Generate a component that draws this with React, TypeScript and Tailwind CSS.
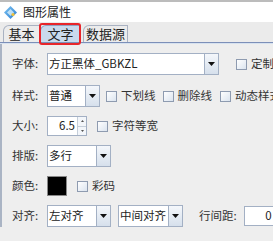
import React from "react";

const font = { fontFamily: '"Noto Sans CJK SC", "Noto Sans", sans-serif' };

function Arrow() {
  return (
    <div className="flex h-full w-[14px] shrink-0 items-center justify-center border-l border-[#a3b0c4] bg-gradient-to-b from-[#f4f7fb] to-[#d6e0ec]">
      <svg width="7" height="4" viewBox="0 0 7 4">
        <path d="M0 0 H7 L3.5 4 Z" fill="#111" />
      </svg>
    </div>
  );
}

function Combo({ text, w }: { text: string; w: string }) {
  return (
    <div className={`flex h-[22px] ${w} shrink-0 items-stretch border border-[#a3b0c4] bg-white`}>
      <div className="flex flex-1 items-center overflow-hidden whitespace-nowrap pl-[1px] text-[11.5px] text-[#222]">
        {text}
      </div>
      <Arrow />
    </div>
  );
}

function Check({ label }: { label: string }) {
  return (
    <div className="flex shrink-0 items-center gap-[4px] whitespace-nowrap text-[11.5px] text-[#333]">
      <div className="h-[11px] w-[11px] shrink-0 border border-[#8e9bb0] bg-gradient-to-br from-[#ffffff] to-[#dbe4ef]" />
      <span>{label}</span>
    </div>
  );
}

function Label({ t }: { t: string }) {
  return <div className="w-[35px] shrink-0 text-[11.5px] text-[#333]">{t}</div>;
}

function Spinner({ v, w }: { v: string; w: string }) {
  return (
    <div className={`flex h-[20px] ${w} shrink-0 items-stretch border border-[#a3b0c4] bg-white`}>
      <div className="flex flex-1 items-center justify-end pr-[2px] text-[11.5px] text-[#222]">{v}</div>
      <div className="flex w-[9px] flex-col border-l border-[#c5ced9]">
        <div className="flex flex-1 items-center justify-center border-b border-[#c5ced9] bg-[#f3f6fa]">
          <svg width="3" height="2" viewBox="0 0 3 2">
            <path d="M0 2 L1.5 0 L3 2 Z" fill="#555" />
          </svg>
        </div>
        <div className="flex flex-1 items-center justify-center bg-[#f3f6fa]">
          <svg width="3" height="2" viewBox="0 0 3 2">
            <path d="M0 0 L1.5 2 L3 0 Z" fill="#555" />
          </svg>
        </div>
      </div>
    </div>
  );
}

export default function App() {
  return (
    <div className="relative h-[241px] w-[273px] overflow-hidden bg-[#eeeeee]" style={font}>
      {/* title bar */}
      <div className="flex h-[22px] items-center gap-[6px] border-t-2 border-[#bcbcbc] bg-white pl-[4px]">
        <svg width="13" height="13" viewBox="0 0 13 13">
          <defs>
            <linearGradient id="g" x1="0" y1="0" x2="1" y2="1">
              <stop offset="0" stopColor="#7cc4f2" />
              <stop offset="1" stopColor="#2a7bd0" />
            </linearGradient>
          </defs>
          <path d="M6.5 0 L13 6.5 L6.5 13 L0 6.5 Z" fill="url(#g)" />
          <path d="M6.5 3 L10 6.5 L6.5 10 L3 6.5 Z" fill="#d9f0fb" opacity="0.8" />
          <circle cx="9" cy="8.5" r="1.6" fill="#f0c23a" />
        </svg>
        <span className="text-[12px] text-[#222]">图形属性</span>
      </div>
      {/* tab strip */}
      <div className="relative flex h-[20px] items-end bg-[#ebebeb] pl-[3px]">
        <div className="flex h-[17px] w-[37px] items-center justify-center rounded-tl-[6px] border border-b-0 border-[#a9b2c2] bg-[#ececec] text-[13px] text-[#222]">
          基本
        </div>
        <div className="flex h-[17px] w-[41px] items-center justify-center rounded-tl-[6px] border border-b-0 border-[#8fa3c3] bg-[#c9daed] text-[13px] text-[#222]">
          文字
        </div>
        <div className="ml-[2px] flex h-[17px] w-[45px] items-center justify-center rounded-tl-[6px] border border-b-0 border-[#a9b2c2] bg-[#ececec] text-[13px] text-[#222]">
          数据源
        </div>
        <div className="absolute left-[39px] top-[1px] h-[22px] w-[42px] rounded-[3px] border-2 border-[#e8262b]" />
      </div>
      <div className="h-[2px] border-t border-[#7c8fb8] bg-[#d7e2ef]" />
      {/* content */}
      <div className="flex flex-col border-l-2 border-[#aab4c4] pl-[10px] pt-[9px]">
        <div className="flex h-[22px] items-center">
          <Label t="字体:" />
          <Combo text="方正黑体_GBKZL" w="w-[172px]" />
          <div className="ml-[17px] shrink-0">
            <Check label="定制" />
          </div>
        </div>
        <div className="mt-[10px] flex h-[22px] items-center">
          <Label t="样式:" />
          <Combo text="普通" w="w-[53px]" />
          <div className="ml-[6px] shrink-0">
            <Check label="下划线" />
          </div>
          <div className="ml-[7px] shrink-0">
            <Check label="删除线" />
          </div>
          <div className="ml-[8px] shrink-0">
            <Check label="动态样式" />
          </div>
        </div>
        <div className="mt-[8px] flex h-[22px] items-center">
          <Label t="大小:" />
          <Spinner v="6.5" w="w-[40px]" />
          <div className="ml-[10px] shrink-0">
            <Check label="字符等宽" />
          </div>
        </div>
        <div className="mt-[8px] flex h-[22px] items-center">
          <Label t="排版:" />
          <Combo text="多行" w="w-[64px]" />
        </div>
        <div className="mt-[8px] flex h-[22px] items-center">
          <Label t="颜色:" />
          <div className="h-[20px] w-[20px] shrink-0 border border-[#888] bg-black" />
          <div className="ml-[10px] shrink-0">
            <Check label="彩码" />
          </div>
        </div>
        <div className="mt-[8px] flex h-[22px] items-center">
          <Label t="对齐:" />
          <Combo text="左对齐" w="w-[64px]" />
          <div className="ml-[7px] shrink-0">
            <Combo text="中间对齐" w="w-[65px]" />
          </div>
          <div className="ml-[16px] shrink-0 text-[11.5px] text-[#333]">行间距:</div>
          <div className="ml-[7px] shrink-0">
            <Spinner v="0" w="w-[40px]" />
          </div>
        </div>
      </div>
    </div>
  );
}
